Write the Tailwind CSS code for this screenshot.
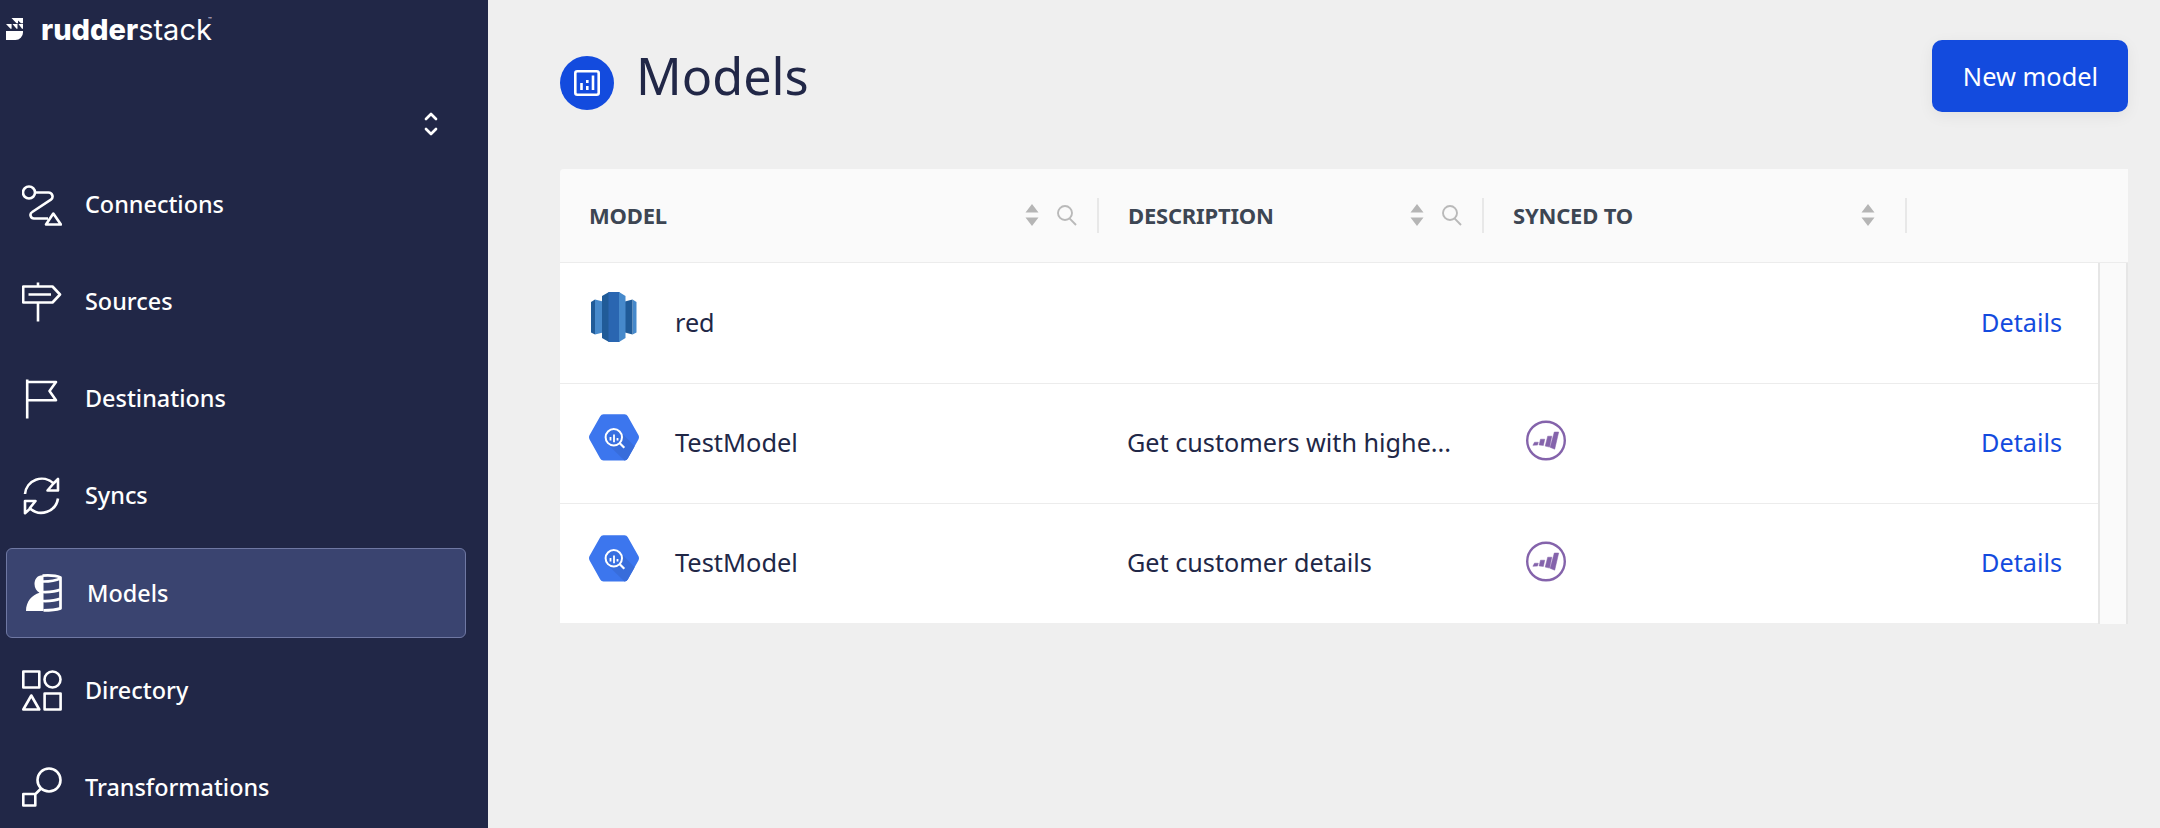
<!DOCTYPE html>
<html lang="en">
<head>
<meta charset="utf-8">
<title>Models - RudderStack</title>
<script src="https://cdn.jsdelivr.net/npm/@tailwindcss/browser@4"></script>
</head>
<body class="flex h-[828px] w-[2160px] overflow-hidden bg-[#efefef] font-['Noto_Sans',sans-serif]">

<svg class="hidden" xmlns="http://www.w3.org/2000/svg">
  <symbol id="sort" viewBox="0 0 14 22"><path d="M7 0 13.5 8.5H.5zM7 22 .5 13.500h13z" fill="#b5b5b5"/></symbol>
  <symbol id="search" viewBox="0 0 20 21"><g fill="none" stroke="#b9b9b9" stroke-width="1.900"><circle cx="8" cy="8" r="7"/><path d="M12.500 13.300 19 20"/></g></symbol>
  <symbol id="bigquery" viewBox="0 0 50 47">
    <path d="M14.500.3h21q2.200 0 3.300 2l10.600 18.800q1.200 2.200 0 4.400L38.800 44.600q-1.100 2-3.300 2h-21q-2.200 0-3.300-2L.6 25.500q-1.200-2.200 0-4.400L11.200 2.300q1.100-2 3.300-2z" fill="#3c76ee"/>
    <path d="M31 17 45.600 32.400 38.800 44.600q-1.100 2-3.300 2L18 29.500z" fill="#386ddb"/>
    <circle cx="24.800" cy="23.300" r="8.200" fill="#386fe0" stroke="#fff" stroke-width="2"/>
    <path d="M21.500 23v3.500M25 20.500v7.800M28.500 24v2.500" stroke="#fff" stroke-width="1.800"/>
    <path d="M30.500 29l4.800 4.800" stroke="#fff" stroke-width="2.200"/>
  </symbol>
  <symbol id="marketo" viewBox="0 0 40 41">
    <circle cx="20" cy="20.500" r="18.800" fill="#fff" stroke="#8463ab" stroke-width="2.400"/>
    <path d="M8.500 22.200h3.800l-.8 2.900-4.600.2zM14.500 19.200h4.200l-1.300 6.200-4.300-.5zM21.700 16.200h4.100l-2.200 10.900-4.400-1zM28.300 12h4.400l-4 17.200-4.600-1.900z" fill="#8463ab" stroke="#8463ab" stroke-width=".5"/>
  </symbol>
</svg>

<aside class="flex w-[488px] shrink-0 flex-col bg-[#212747] text-white">
  <div class="flex h-[56px] shrink-0 items-start gap-[18px] pt-[18px] pl-[6px]">
    <svg class="h-[22px] w-[17px]" viewBox="0 0 17 22" fill="#fff"><path d="M0 13h17v1.500a7.500 7.500 0 0 1-7.500 7.500H0zM5.500 0H17v5.200h-2L12 2.400v2.800h-1.500zM0 6h5.600v4.800H4.500zM6.500 6h5v4.800h-1zM12.500 6H17v4.800h-1z"/></svg>
    <div class="mt-px flex h-[22px] items-center font-['Inter',sans-serif] text-[29px] leading-[22px]"><span class="font-extrabold">rudder</span><span>stack</span><span class="-ml-[4px] self-start text-[6px] leading-[2px]">™</span></div>
  </div>
  <div class="flex h-[104px] shrink-0 justify-end pt-[56px] pr-[50px]">
    <svg class="h-[24px] w-[14px]" viewBox="0 0 14 24" fill="none" stroke="#fff" stroke-width="2.700" stroke-linecap="round" stroke-linejoin="round"><path d="M2 7l5-5 5 5M2 17l5 5 5-5"/></svg>
  </div>

  <nav class="flex shrink-0 flex-col gap-[7px] pl-[6px] text-[23.400px] leading-8 font-medium">
    <a class="flex h-[90px] w-[460px] items-center gap-[23px] pl-4">
      <svg class="h-[41px] w-[40px]" viewBox="0 0 40 41" fill="none" stroke="#fff" stroke-width="2.600" stroke-linejoin="round"><circle cx="7" cy="7.500" r="6"/><path d="M13 7.500h13.500a4 4 0 0 1 2.400 7.200L10.200 27a3.500 3.500 0 0 0 1.800 6.500h14M31.300 28.500l7.600 11H24z"/></svg>
      <span class="pb-[2px]">Connections</span>
    </a>
    <a class="flex h-[90px] w-[460px] items-center gap-[23px] pl-4">
      <svg class="h-[40px] w-[40px]" viewBox="0 0 40 40" fill="none" stroke="#fff" stroke-width="2.600" stroke-linejoin="round"><path d="M16 .5V4M16 21v18.500M1.200 4.500h29.300l7.500 8-7.500 8H1.200zM6.500 12.500H29"/></svg>
      <span class="pb-[2px]">Sources</span>
    </a>
    <a class="flex h-[90px] w-[460px] items-center gap-[23px] pl-4">
      <svg class="h-[40px] w-[40px]" viewBox="0 0 40 40" fill="none" stroke="#fff" stroke-width="2.600" stroke-linejoin="round"><path d="M5.200.5V39.500M5.200 3H34l-6.500 9L34 21.300H5.200"/></svg>
      <span class="pb-[2px]">Destinations</span>
    </a>
    <a class="flex h-[90px] w-[460px] items-center gap-[23px] pl-4">
      <svg class="h-[40px] w-[40px]" viewBox="0 0 40 40" fill="none" stroke="#fff" stroke-width="2.600" stroke-linejoin="round"><path d="M3 18a16.800 16.800 0 0 1 28.500-10.500L36 3v11.500H25.500l6-7M36 22.500A16.800 16.800 0 0 1 8.200 32.500L3 37.200V25h10.500l-6 7.500"/></svg>
      <span class="pb-[2px]">Syncs</span>
    </a>
    <a class="flex h-[90px] w-[460px] items-center gap-[23px] rounded-md border border-[#6f78a3] bg-[#3a4470] pl-[17px]">
      <svg class="h-[40px] w-[40px]" viewBox="0 0 40 40"><path d="M19.500 2.200C13.500 1.500 10.500 6 10.500 11c0 4 2 7.300 5 8.800C8 22 2 28.500 2 38h17.500z" fill="#fff"/><path d="M18.500 2.600q12-.8 18 1.800v31q-6 2-17 2M19 8.500q11 0 17.500-3M19 19q11 .3 17.500-2.500M19 28q11 .3 17.500-2.500" fill="none" stroke="#fff" stroke-width="2.700" stroke-linejoin="round"/></svg>
      <span>Models</span>
    </a>
    <a class="flex h-[90px] w-[460px] items-center gap-[23px] pl-4">
      <svg class="h-[41px] w-[40px]" viewBox="0 0 40 41" fill="none" stroke="#fff" stroke-width="2.600" stroke-linejoin="round"><path d="M1.300 1.500h16v16h-16zM22.600 23.500h16v16h-16zM9.300 25.500l8 14h-16z"/><circle cx="30.500" cy="9.500" r="8"/></svg>
      <span>Directory</span>
    </a>
    <a class="flex h-[90px] w-[460px] items-center gap-[23px] pl-4">
      <svg class="h-[40px] w-[40px]" viewBox="0 0 40 40" fill="none" stroke="#fff" stroke-width="2.600" stroke-linejoin="round"><circle cx="27" cy="13" r="11.500"/><path d="M19 21.500l-6 6M1.300 27h12v11.500h-12z"/></svg>
      <span>Transformations</span>
    </a>
  </nav>
</aside>

<main class="flex grow flex-col pr-8 pl-[72px]">
  <header class="flex h-[169px] items-start justify-between pt-10">
    <div class="flex items-center">
      <div class="mt-[15px] flex size-[54px] items-center justify-center rounded-full bg-[#134bde]">
        <svg class="size-[26px]" viewBox="0 0 26 26" fill="none" stroke="#fff" stroke-width="2.600"><rect x="1.300" y="1.300" width="23.400" height="23.400" rx="2"/><path d="M7.500 13v7M13.300 10v3M13.300 16v4M19 5.500V20"/></svg>
      </div>
      <h1 class="mt-px ml-[22px] text-[50.400px] leading-[70px] text-[#212747]">Models</h1>
    </div>
    <button class="flex h-[72px] w-[196px] items-center justify-center rounded-[10px] bg-[#134bde] pl-px text-[25.400px] leading-8 text-white shadow-[0_4px_16px_rgba(0,0,0,0.06)]">New model</button>
  </header>

  <section class="w-[1568px] text-[#212747]">
    <div class="flex h-[94px] items-center rounded-tl-sm border-b border-[#ececec] bg-[#fafafa] text-[22px] leading-8 font-bold tracking-[-0.2px] text-[#3d4653]">
      <div class="flex h-[35px] w-[539px] items-center border-r-2 border-[#e8e8e8] pr-[20px] pl-[29px]">
        <span class="grow pb-[2px]">MODEL</span>
        <svg class="mb-px h-[22px] w-[14px]"><use href="#sort"/></svg>
        <svg class="mb-px ml-[18px] h-[21px] w-[20px]"><use href="#search"/></svg>
      </div>
      <div class="flex h-[35px] w-[385px] items-center border-r-2 border-[#e8e8e8] pr-[20px] pl-[29px]">
        <span class="grow pb-[2px]">DESCRIPTION</span>
        <svg class="mb-px h-[22px] w-[14px]"><use href="#sort"/></svg>
        <svg class="mb-px ml-[18px] h-[21px] w-[20px]"><use href="#search"/></svg>
      </div>
      <div class="flex h-[35px] w-[423px] items-center border-r-2 border-[#e8e8e8] pr-[30px] pl-[29px]">
        <span class="grow pb-[2px]">SYNCED TO</span>
        <svg class="mb-px h-[22px] w-[14px]"><use href="#sort"/></svg>
      </div>
    </div>

    <div class="flex">
      <div class="w-[1538px] text-[25.200px] leading-8">
        <div class="flex h-[121px] items-center border-b border-[#ececec] bg-white">
          <div class="flex w-[539px] items-center gap-[37px] pl-[29px]">
            <svg class="mb-[12px] h-[50px] w-[49px]" viewBox="0 0 49 50"><path d="M2 10l4-2.500v35L2 40.500z" fill="#205b98"/><path d="M6 7.500l10 2.500v30L6 42.500z" fill="#4689cb"/><path d="M47.500 10l-4-2.500v35l4-2z" fill="#4689cb"/><path d="M43.500 7.500L34 10v30l9.500 2.500z" fill="#205b98"/><path d="M13 4l7-4v50l-7-4z" fill="#205b98"/><path d="M19.500 0h11v50h-11z" fill="#2a66b1"/><path d="M30 0l6.500 4v42L30 50z" fill="#4689cb"/></svg>
            <span class="pb-[2px]">red</span>
          </div>
          <a class="ml-auto pr-[36px] pb-[2px] text-[#134bde]">Details</a>
        </div>
        <div class="flex h-[120px] items-center border-b border-[#ececec] bg-white">
          <div class="flex w-[539px] items-center gap-[36px] pl-[29px]">
            <svg class="mb-[12px] h-[47px] w-[50px]"><use href="#bigquery"/></svg>
            <span class="pb-[3px] text-[25.400px]">TestModel</span>
          </div>
          <div class="w-[385px] pb-[3px] pl-[28px]">Get customers with highe...</div>
          <div class="w-[423px] pl-[42px]"><svg class="mb-[6px] h-[41px] w-[40px]"><use href="#marketo"/></svg></div>
          <a class="ml-auto pr-[36px] pb-[3px] text-[#134bde]">Details</a>
        </div>
        <div class="flex h-[119px] items-center bg-white">
          <div class="flex w-[539px] items-center gap-[36px] pl-[29px]">
            <svg class="mb-[11px] h-[47px] w-[50px]"><use href="#bigquery"/></svg>
            <span class="pb-[3px] text-[25.400px]">TestModel</span>
          </div>
          <div class="w-[385px] pb-[3px] pl-[28px]">Get customer details</div>
          <div class="w-[423px] pl-[42px]"><svg class="mb-[5px] h-[41px] w-[40px]"><use href="#marketo"/></svg></div>
          <a class="ml-auto pr-[36px] pb-[3px] text-[#134bde]">Details</a>
        </div>
      </div>
      <div class="h-[361px] w-[30px] border-x-2 border-[#e6e6e6] bg-[#fafafa]"></div>
    </div>
  </section>
</main>
</body>
</html>
